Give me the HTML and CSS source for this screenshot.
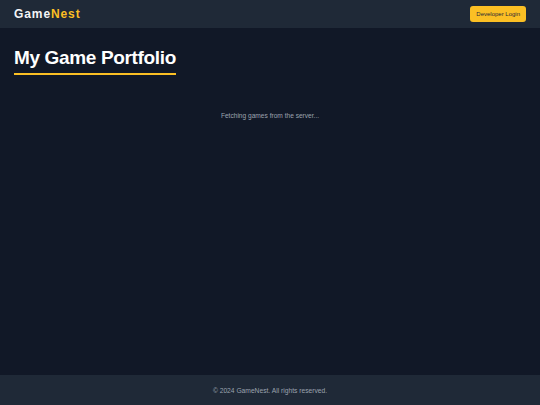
FILE: index.html
```html
<!DOCTYPE html>
<html lang="en">
<head>
<meta charset="utf-8">
<title>GameNest</title>
<link rel="stylesheet" href="styles.css">
</head>
<body>
<div class="page">
  <header class="topbar">
    <div class="logo">Game<span class="logo-accent">Nest</span></div>
    <button class="login-btn">Developer Login</button>
  </header>
  <main class="content">
    <h1 class="title">My Game Portfolio</h1>
    <p class="loading">Fetching games from the server...</p>
  </main>
  <footer class="footer">© 2024 GameNest. All rights reserved.</footer>
</div>
</body>
</html>
```

FILE: styles.css
```css
* { box-sizing: border-box; }
html, body { margin: 0; padding: 0; }
body {
  background: #111827;
  font-family: "Liberation Sans", Arial, sans-serif;
  color: #f9fafb;
}
.page {
  min-height: 100vh;
  display: flex;
  flex-direction: column;
}
.topbar {
  height: 28px;
  background: #1f2937;
  display: flex;
  align-items: center;
  justify-content: space-between;
  padding: 0 14px;
}
.logo {
  font-size: 12px;
  font-weight: 700;
  letter-spacing: 0.9px;
  color: #f3f4f6;
  line-height: 1;
}
.logo-accent { color: #fbbf24; }
.login-btn {
  height: 16px;
  padding: 0 6px;
  border: none;
  border-radius: 3px;
  background: #fbbf24;
  color: #1f2937;
  font-family: "Liberation Sans", Arial, sans-serif;
  font-size: 6px;
  line-height: 16px;
}
.content {
  flex: 1;
  padding: 18px 14px 0;
}
.title {
  display: inline-block;
  margin: 0;
  font-size: 19px;
  line-height: 24px;
  font-weight: 700;
  letter-spacing: -0.35px;
  color: #ffffff;
  padding-bottom: 3px;
  border-bottom: 2px solid #fbbf24;
}
.loading {
  margin: 36px 0 0;
  text-align: center;
  font-size: 6.6px;
  line-height: 10px;
  color: #9ca3af;
}
.footer {
  height: 30px;
  background: #1f2937;
  display: flex;
  align-items: center;
  justify-content: center;
  font-size: 6.7px;
  color: #9ca3af;
}
```
